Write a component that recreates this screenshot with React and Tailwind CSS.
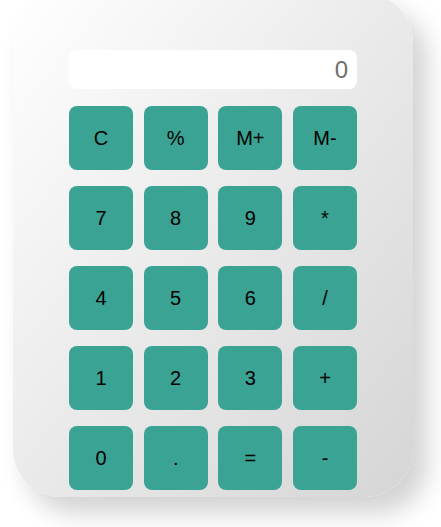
export default function App() {
  const keys = ["C", "%", "M+", "M-", "7", "8", "9", "*", "4", "5", "6", "/", "1", "2", "3", "+", "0", ".", "=", "-"];
  return (
    <div className="w-[441px] h-[527px] bg-white overflow-hidden relative" style={{ fontFamily: '"Liberation Sans", Arial, sans-serif' }}>
      <div className="absolute left-[13px] top-[-6px] w-[400px] h-[503px] rounded-[48px] bg-gradient-to-br from-[#ffffff] to-[#d5d5d5] shadow-[14px_16px_26px_rgba(0,0,0,0.18),-14px_-14px_26px_rgba(255,255,255,1)] px-[56px] pt-[56px]">
        <div className="h-[39px] bg-white rounded-[8px] flex items-center justify-end pr-[9px] text-[24px] text-[#6e6e6e]">0</div>
        <div className="mt-[17px] grid grid-cols-4 gap-x-[10.67px] gap-y-[16px]">
          {keys.map((k) => (
            <div key={k} className="h-[64px] rounded-[8px] bg-[#3ba393] flex items-center justify-center text-[20px] text-black">
              {k}
            </div>
          ))}
        </div>
      </div>
    </div>
  );
}
